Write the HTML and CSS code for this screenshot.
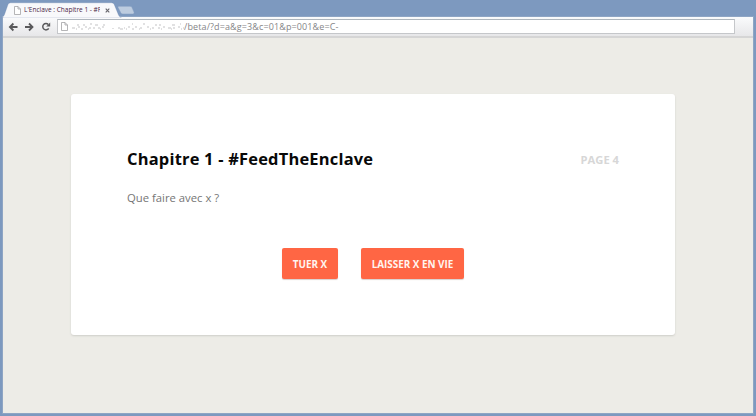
FILE: index.html
```
<!DOCTYPE html>
<html lang="fr">
<head>
<meta charset="utf-8">
<title>L'Enclave : Chapitre 1</title>
<link rel="stylesheet" href="styles.css">
</head>
<body>
<div class="tabs">
  <svg class="tab-shape" width="134" height="16" viewBox="0 0 134 16">
    <path d="M0 16V14.5Q1 14 1.5 12.5L5 2.5Q5.7.8 7.5.8H108.5Q110.5 .8 111.2 2.5L115.5 13Q116.2 15 118 15V16Z" fill="#f8f9fb" stroke="#5f7ca7" stroke-opacity=".5" stroke-width=".5"/>
    <path d="M115 5.5Q114.5 4.3 116 4.3H127Q128.4 4.3 129 5.5L131.1 10.3Q131.6 12 129.8 12H119.8Q118.4 12 117.8 10.8Z" fill="#bdccdf" stroke="#839cc0" stroke-width=".5"/>
  </svg>
  <div class="tab">
    <svg class="doc" width="7" height="9" viewBox="0 0 7 9"><path d="M.5.5H4L6.5 3V8.5H.5ZM4 .5V3H6.5" fill="#fff" stroke="#a2a2a5" stroke-width=".8"/></svg>
    <span class="tab-title">L'Enclave : Chapitre 1 - #F</span>
    <svg class="close" width="5" height="5" viewBox="0 0 5 5"><path d="M.7.7L4.3 4.3M4.3.7L.7 4.3" stroke="#66656b" stroke-width="1.1"/></svg>
  </div>
</div>
<div class="window">
  <div class="toolbar">
    <svg class="nav" width="44" height="10" viewBox="0 0 44 10" fill="none" stroke="#59595b" stroke-width="1.8">
      <path d="M9.5 5H2.5M5.4 1.5L1.9 5L5.4 8.5"/>
      <path d="M17 5H24M21 1.5L24.5 5L21 8.5"/>
      <path d="M40.3 2.5A3.2 3.2 0 1 0 40.7 6.4" stroke-width="1.5"/>
      <path d="M42.2.6V4.6H38.2Z" fill="#59595b" stroke="none"/>
    </svg>
    <div class="address">
      <svg class="doc" width="7" height="9" viewBox="0 0 7 9"><path d="M.5.5H4L6.5 3V8.5H.5ZM4 .5V3H6.5" fill="#fff" stroke="#a2a2a5" stroke-width=".8"/></svg>
      <svg class="erased" width="115" height="9" viewBox="0 0 115 9" fill="none" stroke="#c3c3c5" stroke-width="1">
        <path d="M6 3H8M12 3H14M19 2H21M24 3H27M32 3H34M61 2H62M73 1V3M84 3H86M89 2V4M101 3H104M109 2H110"/>
        <path d="M1 6H4M7 5H9M10 7H12M14 5H16M18 6H20M23 5V7M27 6H29M31 5H33M42 6V7M47 6H49M53 6H54M58 4V6M64 5H66M70 5V7M76 5H78M81 6H83M87 6H89M92 5H94M97 6H100M103 5V7M107 5H109M112 6H113"/>
        <path d="M5 7H6M17 7H18M29 7H30M49 7H52M55 7H56M61 7H63M68 7H69M79 7H80M90 7H91M100 7H101M110 7H111"/>
      </svg>
      <span class="url">/beta/?d=a&amp;g=3&amp;c=01&amp;p=001&amp;e=C-</span>
    </div>
  </div>
  <main class="page">
    <article class="card">
      <header class="heading">
        <h1>Chapitre 1 - #FeedTheEnclave</h1>
        <span class="page-number">PAGE 4</span>
      </header>
      <p>Que faire avec x ?</p>
      <div class="choices">
        <button class="kill">TUER X</button>
        <button class="spare">LAISSER X EN VIE</button>
      </div>
    </article>
  </main>
</div>
</body>
</html>
```
FILE: styles.css
```
* { box-sizing: border-box; }
body {
  margin: 0;
  width: 756px;
  height: 416px;
  overflow: hidden;
  background: #7d99bf;
  font-family: "Open Sans", "Noto Sans", sans-serif;
}
svg { flex: none; display: block; }
.tabs { position: relative; height: 17px; padding: 2px 0 0 3px; }
.tab-shape { position: absolute; left: 3px; top: 2px; }
.tab {
  position: relative;
  display: flex;
  align-items: center;
  width: 112px;
  height: 16px;
  padding-left: 11px;
}
.tab-title {
  width: 76px;
  margin-left: 3px;
  overflow: hidden;
  white-space: nowrap;
  font-size: 6.5px;
  line-height: 12px;
  color: #4b2545;
}
.close { margin-left: 5px; }
.window {
  width: 750px;
  height: 396px;
  margin-left: 3px;
  background: #edece7;
  box-shadow: 0 0 0 1px #8ea5c4;
}
.toolbar {
  display: flex;
  height: 21px;
  padding: 2px 17px 0 5px;
  background: linear-gradient(#fafbfc, #e7e7e9);
  border-bottom: 2px solid #d5d5d5;
}
.nav { margin-top: 3px; }
.address {
  display: flex;
  align-items: center;
  width: 678px;
  height: 15px;
  margin-left: 5px;
  padding-left: 3px;
  background: #fff;
  border: 1px solid #c5c7ca;
  border-top-color: #aeb6bd;
}
.erased { margin-left: 3px; }
.url {
  margin: 0 0 1px -2px;
  font-size: 9px;
  letter-spacing: .12px;
  line-height: 13px;
  color: #858587;
  white-space: nowrap;
}
.page { padding: 56px 78px 0 68px; }
.card {
  height: 241px;
  padding: 52px 56px 0;
  background: #fff;
  border-radius: 3px;
  box-shadow: 0 1px 2px #cfcec9;
}
.heading { display: flex; justify-content: space-between; align-items: center; height: 26px; }
h1 { margin: 0; font-size: 16.45px; letter-spacing: .21px; line-height: 26px; font-weight: 700; color: #080808; white-space: nowrap; }
.page-number { margin-top: 2px; font-size: 11.2px; line-height: 16px; font-weight: 700; color: #d7d7d7; }
p { margin: 16px 0 0; font-size: 11.3px; line-height: 20px; color: #757575; }
.choices { display: flex; justify-content: center; gap: 23px; margin-top: 40px; }
button {
  height: 31px;
  padding: 1px 0 0;
  border: 0;
  border-radius: 2px;
  background: #ff6644;
  box-shadow: 0 1px 1px #d9cfcc;
  color: #fff5f0;
  font: 700 9.9px/30px "Open Sans", sans-serif;
  white-space: nowrap;
}
.kill { width: 56px; }
.spare { width: 103px; }
```
